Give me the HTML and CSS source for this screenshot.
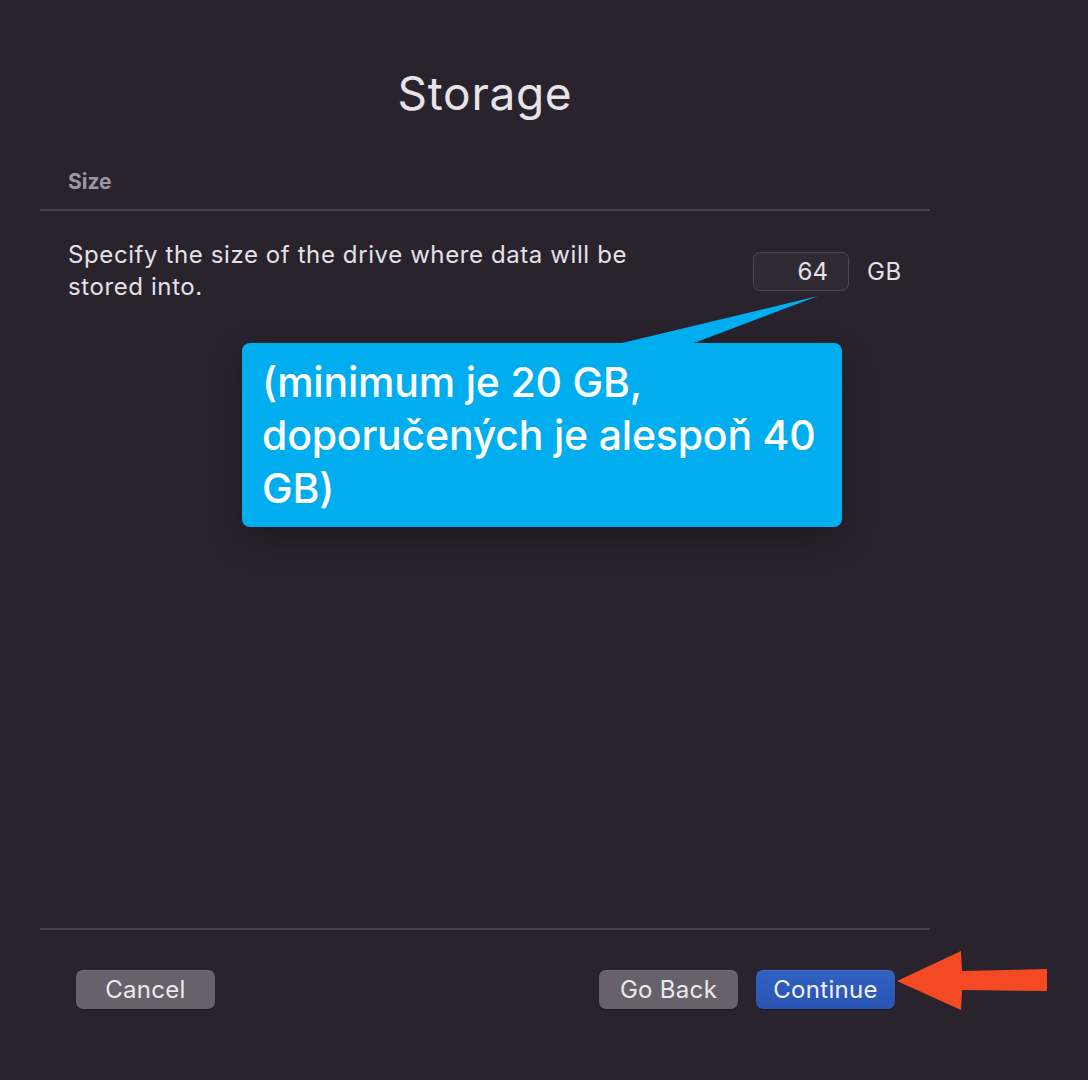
FILE: index.html
```html
<!DOCTYPE html>
<html lang="en">
<head>
<meta charset="utf-8">
<title>Storage</title>
<link rel="stylesheet" href="styles.css">
</head>
<body>
<div class="window">
  <h1 class="title">Storage</h1>
  <div class="section-label">Size</div>
  <div class="divider"></div>
  <div class="row">
    <p class="desc">Specify the size of the drive where data will be stored into.</p>
    <div class="size-field">
      <div class="input">64</div>
      <span class="unit">GB</span>
    </div>
  </div>
  <div class="spacer"></div>
  <div class="divider"></div>
  <div class="footer">
    <button class="btn">Cancel</button>
    <div class="right-buttons">
      <button class="btn">Go Back</button>
      <button class="btn primary">Continue</button>
    </div>
  </div>
</div>

<div class="callout">
  <svg class="callout-tail" width="200" height="50" viewBox="0 0 200 50"><polygon points="0,48 196,1 72,48" fill="#00aeef"/></svg>
  <p>(minimum je 20 GB, doporučených je alespoň 40 GB)</p>
</div>

<svg class="red-arrow" width="152" height="62" viewBox="0 0 152 62"><polygon points="0,31 64,1 65,21 150,19 150,41 65,40 64,60" fill="#f44a24"/></svg>
</body>
</html>
```
FILE: styles.css
```css
html, body {
  margin: 0;
  padding: 0;
}
body {
  background: #28232d;
  width: 1088px;
  height: 1080px;
  overflow: hidden;
  font-family: Inter, "Liberation Sans", sans-serif;
  color: #e4e1e7;
  position: relative;
}
.window {
  margin-left: 40px;
  width: 890px;
  height: 1080px;
  display: flex;
  flex-direction: column;
}
.title {
  margin: 63px 0 0;
  text-align: center;
  font-size: 46px;
  font-weight: 400;
  line-height: 60px;
  color: #e6e3e9;
  letter-spacing: 0.7px;
}
.section-label {
  margin-top: 45px;
  padding-left: 28px;
  font-size: 21px;
  font-weight: 700;
  line-height: 28px;
  color: #9b969f;
}
.divider {
  height: 2px;
  background: #48434e;
}
.section-label + .divider {
  margin-top: 13px;
}
.row {
  display: flex;
  justify-content: space-between;
  align-items: center;
  padding: 28px 27px 0 28px;
}
.desc {
  margin: 0;
  width: 590px;
  font-size: 24px;
  line-height: 32px;
  letter-spacing: 0.6px;
  color: #e4e1e7;
}
.size-field {
  display: flex;
  align-items: center;
  gap: 18px;
}
.input {
  box-sizing: border-box;
  width: 96px;
  height: 39px;
  border: 1px solid #4d4852;
  border-radius: 7px;
  background: #2f2a34;
  text-align: right;
  padding-right: 20px;
  font-size: 24px;
  line-height: 37px;
  color: #e4e1e7;
}
.unit {
  font-size: 24px;
  letter-spacing: 0.5px;
  min-width: 36px;
  color: #e4e1e7;
}
.spacer {
  flex: 1;
}
.footer {
  display: flex;
  justify-content: space-between;
  padding: 40px 35px 0 36px;
  height: 110px;
}
.right-buttons {
  display: flex;
  gap: 18px;
}
.btn {
  box-sizing: border-box;
  width: 139px;
  height: 39px;
  border: none;
  border-radius: 7px;
  background: #66616a;
  box-shadow: 0 1px 1px rgba(0, 0, 0, 0.35), inset 0 1px 0 rgba(255, 255, 255, 0.08);
  color: #ebe9ed;
  font-family: Inter, "Liberation Sans", sans-serif;
  font-size: 24px;
  letter-spacing: 0.3px;
  padding: 0;
  line-height: 39px;
}
.btn.primary {
  background: linear-gradient(#3262c4, #2853b2);
  color: #f0f1f8;
}
.callout {
  position: absolute;
  left: 242px;
  top: 343px;
  width: 600px;
  height: 184px;
  box-sizing: border-box;
  background: #00aeef;
  border-radius: 8px;
  padding: 13px 18px 0 20px;
  box-shadow: 0 12px 36px rgba(0, 0, 0, 0.28);
}
.callout-tail {
  position: absolute;
  left: 380px;
  top: -48px;
  display: block;
}
.callout p {
  margin: 0;
  font-size: 41px;
  font-weight: 500;
  line-height: 53px;
  color: #ffffff;
  letter-spacing: -0.2px;
}
.red-arrow {
  position: absolute;
  left: 897px;
  top: 950px;
  display: block;
}
```
